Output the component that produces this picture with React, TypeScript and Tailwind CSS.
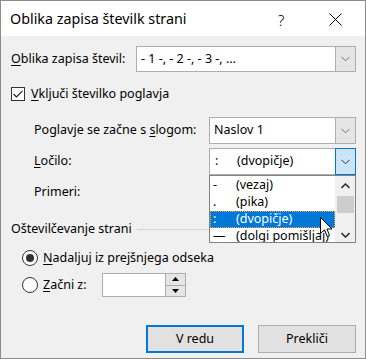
import React from "react";

const font = { fontFamily: '"Noto Sans", "Open Sans", sans-serif' };

function Chevron({ color = "#606060" }: { color?: string }) {
  return (
    <svg width="9" height="6" viewBox="0 0 9 6">
      <path d="M0.5 0.8 L4.5 4.8 L8.5 0.8" fill="none" stroke={color} strokeWidth="1" />
    </svg>
  );
}

function Combo({ children, active = false }: { children: React.ReactNode; active?: boolean }) {
  return (
    <div className="flex h-full w-full border border-[#adadad] bg-white">
      <div className="flex flex-1 items-center pl-[4px]">{children}</div>
      <div
        className={
          active
            ? "flex w-[21px] items-center justify-center border border-[#0078d7] bg-[#cce4f7] -my-px -mr-px"
            : "flex w-[20px] items-center justify-center border-l border-[#adadad] bg-[#e5e5e5]"
        }
      >
        <Chevron color={active ? "#303030" : "#707070"} />
      </div>
    </div>
  );
}

function U({ children }: { children: React.ReactNode }) {
  return <span className="underline underline-offset-2 decoration-1">{children}</span>;
}

export default function App() {
  const items = [
    { s: "-", t: "(vezaj)" },
    { s: ".", t: "(pika)" },
    { s: ":", t: "(dvopičje)", sel: true },
    { s: "—", t: "(dolgi pomišljaj)" },
  ];

  return (
    <div className="w-[366px] h-[359px] border border-[#8c8c8c] bg-[#f0f0f0] text-black text-[12.5px] flex flex-col" style={font}>
      {/* title bar */}
      <div className="h-[35px] bg-white flex items-center pl-[9px] pt-[2px] relative">
        <span className="text-[14.3px] leading-none">Oblika zapisa številk strani</span>
        <span className="absolute left-[277px] top-[8px] text-[15px] font-light">?</span>
        <svg className="absolute left-[328px] top-[12px]" width="13" height="13" viewBox="0 0 13 13">
          <path d="M0.5 0.5 L12.5 12.5 M12.5 0.5 L0.5 12.5" stroke="#000" strokeWidth="1" />
        </svg>
      </div>

      <div className="relative flex-1 flex flex-col pl-[10px] pr-[9px]">
        {/* oblika */}
        <div className="mt-[10px] h-[26px] flex items-center">
          <span className="w-[125px]"><U>O</U>blika zapisa števil:</span>
          <div className="h-full flex-1">
            <Combo>- 1 -, - 2 -, - 3 -, …</Combo>
          </div>
        </div>

        {/* checkbox */}
        <div className="mt-[15px] h-[14px] flex items-center">
          <div className="w-[14px] h-[14px] border border-[#333] bg-white flex items-center justify-center">
            <svg width="10" height="8" viewBox="0 0 10 8">
              <path d="M0.5 4 L3.5 7 L9.5 0.8" fill="none" stroke="#222" strokeWidth="1.2" />
            </svg>
          </div>
          <span className="ml-[6px]"><U>V</U>ključi številko poglavja</span>
        </div>

        {/* poglavje */}
        <div className="mt-[16px] h-[27px] flex items-center pl-[23px]">
          <span className="w-[175px]">Poglavje se začne s <U>s</U>logom:</span>
          <div className="h-full flex-1">
            <Combo>Naslov 1</Combo>
          </div>
        </div>

        {/* ločilo */}
        <div className="mt-[4px] h-[27px] flex items-center pl-[23px]">
          <span className="w-[175px]"><U>L</U>očilo:</span>
          <div className="h-full flex-1">
            <Combo active>
              <span className="w-[23px] pl-[1px]">:</span>
              <span>(dvopičje)</span>
            </Combo>
          </div>
        </div>

        {/* primeri */}
        <div className="mt-[9px] h-[16px] flex items-center pl-[23px]">
          <span>Primeri:</span>
        </div>

        {/* separator */}
        <div className="mt-[21px] h-[16px] flex items-center">
          <span>Oštevilčevanje strani</span>
          <div className="ml-[5px] flex-1 h-px bg-[#d5d5d5]" />
        </div>

        {/* radio 1 */}
        <div className="mt-[13px] h-[16px] flex items-center pl-[11px]">
          <div className="w-[16px] h-[16px] rounded-full border border-[#333] bg-white flex items-center justify-center">
            <div className="w-[8px] h-[8px] rounded-full bg-[#333]" />
          </div>
          <span className="ml-[5px]"><U>N</U>adaljuj iz prejšnjega odseka</span>
        </div>

        {/* radio 2 */}
        <div className="mt-[7px] h-[24px] flex items-center pl-[11px]">
          <div className="w-[16px] h-[16px] rounded-full border border-[#333] bg-white" />
          <span className="ml-[5px] w-[59px]"><U>Z</U>ačni z:</span>
          <div className="w-[84px] h-full border border-[#adadad] bg-white flex justify-end">
            <div className="w-[20px] h-full flex flex-col border-l border-[#adadad]">
              <div className="flex-1 bg-[#e5e5e5] border-b border-[#adadad] flex items-center justify-center">
                <svg width="7" height="4" viewBox="0 0 7 4"><path d="M0 4 L3.5 0 L7 4 Z" fill="#000" /></svg>
              </div>
              <div className="flex-1 bg-[#e5e5e5] flex items-center justify-center">
                <svg width="7" height="4" viewBox="0 0 7 4"><path d="M0 0 L3.5 4 L7 0 Z" fill="#000" /></svg>
              </div>
            </div>
          </div>
        </div>

        {/* buttons */}
        <div className="mt-[28px] flex justify-end gap-[14px]">
          <button className="w-[98px] h-[28px] border-2 border-[#0078d7] bg-[#e1e1e1]">V redu</button>
          <button className="w-[98px] h-[28px] border border-[#adadad] bg-[#e1e1e1]">Prekliči</button>
        </div>

        {/* dropdown list */}
        <div className="absolute left-[208px] top-[139px] w-[147px] h-[68px] border border-[#828282] bg-white flex overflow-hidden">
          <div className="flex-1 flex flex-col pt-[1px]">
            {items.map((it) => (
              <div
                key={it.t}
                className={
                  it.sel
                    ? "h-[17px] flex items-center bg-[#0078d7] text-white border border-dotted border-[#f7a440]"
                    : "h-[17px] flex items-center border border-transparent"
                }
              >
                <span className="w-[25px] pl-[2px]">{it.s}</span>
                <span className="whitespace-nowrap">{it.t}</span>
              </div>
            ))}
          </div>
          <div className="w-[20px] bg-[#f0f0f0] flex flex-col items-center">
            <div className="h-[20px] flex items-center">
              <svg width="9" height="6" viewBox="0 0 9 6"><path d="M0.5 5 L4.5 1 L8.5 5" fill="none" stroke="#333" strokeWidth="1.6" /></svg>
            </div>
            <div className="w-[17px] h-[17px] bg-[#cdcdcd]" />
            <div className="flex-1 flex items-end pb-[4px]">
              <svg width="9" height="6" viewBox="0 0 9 6"><path d="M0.5 1 L4.5 5 L8.5 1" fill="none" stroke="#333" strokeWidth="1.6" /></svg>
            </div>
          </div>
        </div>

        {/* mouse cursor */}
        <svg className="absolute left-[319px] top-[181px]" width="13" height="21" viewBox="0 0 13 21">
          <path d="M0.5 0.5 L0.5 16.5 L4.5 12.8 L7.2 19.5 L9.6 18.5 L7 12 L12 12 Z" fill="#fff" stroke="#000" strokeWidth="1" strokeLinejoin="round" />
        </svg>
      </div>
    </div>
  );
}
